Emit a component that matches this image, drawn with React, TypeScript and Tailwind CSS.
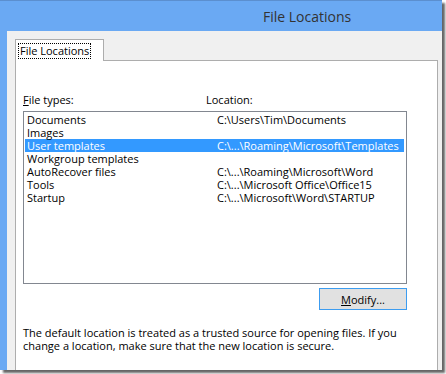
import React from "react";

const rows: [string, string][] = [
  ["Documents", "C:\\Users\\Tim\\Documents"],
  ["Images", ""],
  ["User templates", "C:\\...\\Roaming\\Microsoft\\Templates"],
  ["Workgroup templates", ""],
  ["AutoRecover files", "C:\\...\\Roaming\\Microsoft\\Word"],
  ["Tools", "C:\\...\\Microsoft Office\\Office15"],
  ["Startup", "C:\\...\\Microsoft\\Word\\STARTUP"],
];

export default function App() {
  return (
    <div
      className="w-[446px] h-[374px] bg-white text-black"
      style={{ fontFamily: '"Open Sans", "Noto Sans", sans-serif' }}
    >
      <div className="w-[442px] h-[370px] flex flex-col bg-[#6aa9f3] border-t border-[#5b8fcf] shadow-[3px_3px_2px_rgba(0,0,0,0.6)]">
        <div className="h-[30px] flex items-center pl-[263px] text-[14px] text-[#333333] shrink-0">
          File Locations
        </div>
        <div className="flex-1 ml-[7px] bg-[#f0f0f0] pl-[8px] pr-[4px] pt-[8px] flex flex-col text-[11px] leading-[13px]">
          <div className="w-[89px] h-[22px] -mb-px bg-white border-t border-l border-r border-[#adadad] flex items-center pl-[3px] relative z-10">
            <span className="outline-1 outline-dotted outline-black px-[1px] py-[1px] leading-[12px] whitespace-nowrap">
              File Locations
            </span>
          </div>
          <div className="flex-1 bg-white border-t border-l border-r border-[#adadad] pl-[7px] pt-[31px] flex flex-col">
            <div className="flex h-[15px] items-center">
              <span className="w-[183px]">
                <span className="underline">F</span>ile types:
              </span>
              <span>Location:</span>
            </div>
            <div className="mt-[4px] w-[384px] h-[173px] border border-[#828790] pt-[1px] pl-[1px] pr-[2px]">
              {rows.map(([name, loc]) => {
                const sel = name === "User templates";
                return (
                  <div
                    key={name}
                    className={
                      "flex h-[13px] items-center pl-[2px] leading-[13px] " +
                      (sel ? "bg-[#3399ff] text-white" : "")
                    }
                  >
                    <span className="w-[190px] whitespace-nowrap">{name}</span>
                    <span className="whitespace-nowrap">{loc}</span>
                  </div>
                );
              })}
            </div>
            <div className="w-[384px] flex justify-end mt-[4px]">
              <button className="w-[88px] h-[22px] border border-[#3c9cf0] bg-[#e1e1e1] flex items-center justify-center">
                <span>
                  <span className="underline">M</span>odify...
                </span>
              </button>
            </div>
            <p className="mt-[16px] w-[410px] whitespace-nowrap leading-[13px]">
              The default location is treated as a trusted source for opening files. If you
              <br />
              change a location, make sure that the new location is secure.
            </p>
          </div>
        </div>
      </div>
    </div>
  );
}
